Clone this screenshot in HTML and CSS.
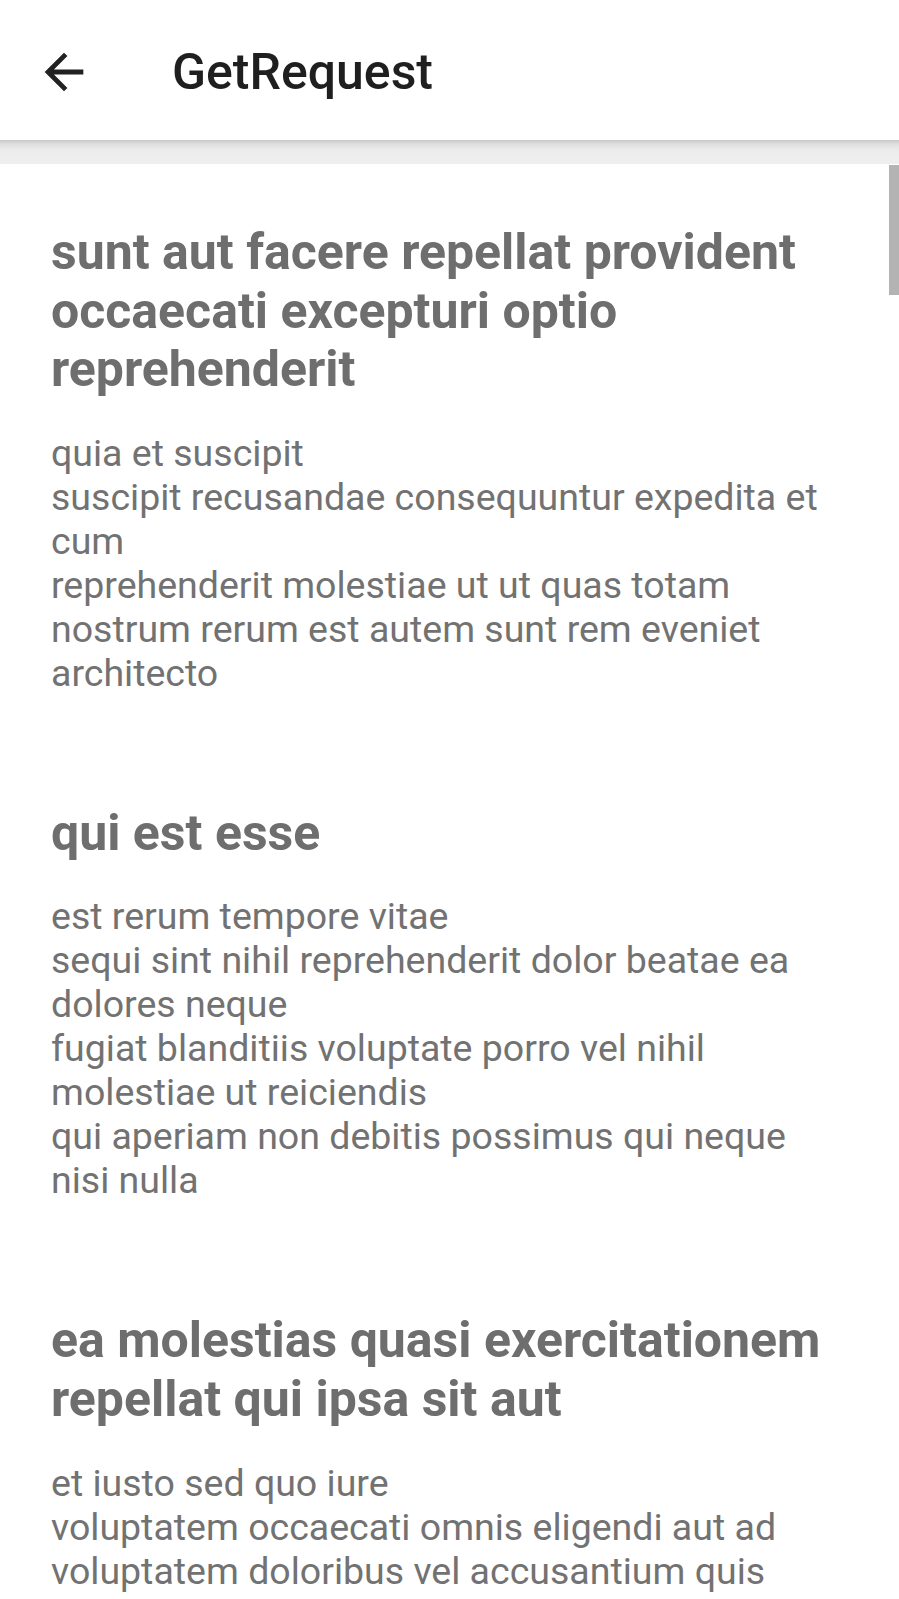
FILE: index.html
```html
<!DOCTYPE html>
<html lang="en">
<head>
<meta charset="utf-8">
<title>GetRequest</title>
<link rel="stylesheet" href="styles.css">
</head>
<body>
<div class="screen">
  <header class="appbar">
    <svg class="back" viewBox="0 0 24 24" aria-hidden="true"><path d="M20 11H7.83l5.59-5.59L12 4l-8 8 8 8 1.41-1.41L7.83 13H20v-2z"/></svg>
    <h1 class="appbar-title">GetRequest</h1>
  </header>
  <div class="band"></div>
  <main class="list">
    <article class="post">
      <h2 class="post-title">sunt aut facere repellat provident occaecati excepturi optio reprehenderit</h2>
      <p class="post-body">quia et suscipit
suscipit recusandae consequuntur expedita et cum
reprehenderit molestiae ut ut quas totam
nostrum rerum est autem sunt rem eveniet architecto</p>
    </article>
    <article class="post">
      <h2 class="post-title">qui est esse</h2>
      <p class="post-body">est rerum tempore vitae
sequi sint nihil reprehenderit dolor beatae ea dolores neque
fugiat blanditiis voluptate porro vel nihil molestiae ut reiciendis
qui aperiam non debitis possimus qui neque nisi nulla</p>
    </article>
    <article class="post">
      <h2 class="post-title">ea molestias quasi exercitationem repellat qui ipsa sit aut</h2>
      <p class="post-body">et iusto sed quo iure
voluptatem occaecati omnis eligendi aut ad
voluptatem doloribus vel accusantium quis pariatur
molestiae porro eius odio et labore et velit aut</p>
    </article>
    <div class="scrollbar"></div>
  </main>
</div>
</body>
</html>
```

FILE: styles.css
```css
html, body {
  margin: 0;
  padding: 0;
  height: 1599px;
  overflow: hidden;
  background: #ffffff;
}

.screen {
  display: flex;
  flex-direction: column;
  height: 1599px;
  font-family: Roboto, "Noto Sans", sans-serif;
}

.appbar {
  display: flex;
  align-items: center;
  height: 140px;
  box-sizing: border-box;
  padding: 4px 0 0 35px;
  background: #ffffff;
  flex: none;
}

.back {
  width: 58px;
  height: 58px;
  fill: #212121;
  flex: none;
}

.appbar-title {
  margin: 0 0 0 79px;
  font-size: 50px;
  font-weight: 500;
  color: #1f1f1f;
  line-height: 1;
}

.band {
  height: 24px;
  flex: none;
  background: linear-gradient(to bottom, #c9c9c9 0px, #dedede 4px, #eaeaea 9px, #eeeeee 14px, #eeeeee 24px);
}

.list {
  position: relative;
  flex: 1;
  padding-top: 4px;
  background: #ffffff;
}

.post {
  padding: 55px 50px 54px 51px;
}

.post-title {
  margin: 0 0 32px;
  font-size: 50px;
  line-height: 58.6px;
  font-weight: 700;
  color: #6e6e6e;
}

.post-body {
  margin: 0;
  font-size: 37.5px;
  line-height: 44px;
  font-weight: 400;
  color: #727272;
  white-space: pre-line;
}

.scrollbar {
  position: absolute;
  top: 1px;
  right: 0;
  width: 10px;
  height: 130px;
  background: #b3b3b3;
}
```
